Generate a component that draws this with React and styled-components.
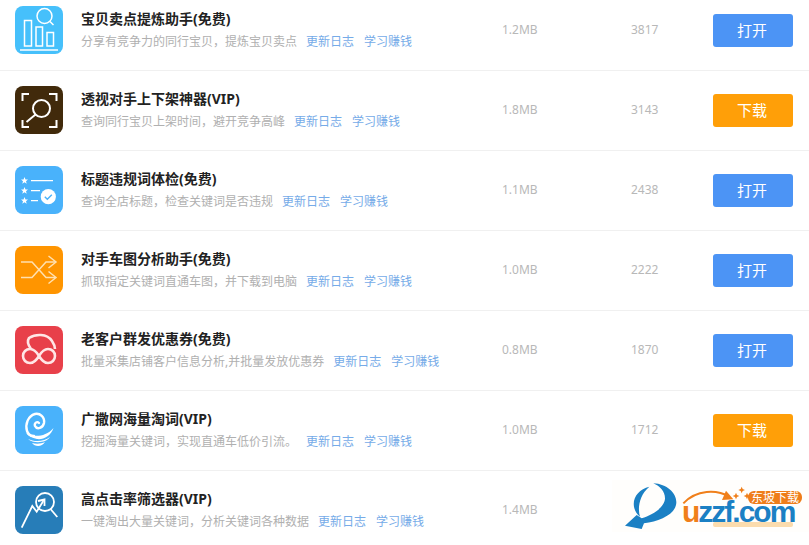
import React from 'react'
import styled, { createGlobalStyle } from 'styled-components'

const GlobalStyle = createGlobalStyle`
  html, body {
    margin: 0;
    padding: 0;
    background: #ffffff;
    overflow: hidden;
  }
  body {
    font-family: "Noto Sans", "Noto Sans CJK SC", sans-serif;
  }
`

const Page = styled.div`
  position: relative;
  width: 809px;
  height: 545px;
  overflow: hidden;
`

const List = styled.div`
  margin-top: -9px;
`

const Row = styled.div`
  display: flex;
  align-items: center;
  box-sizing: border-box;
  height: 80px;
  padding: 0 0 1px 15px;
  border-bottom: 1px solid #f0f0f0;
`

const IconBox = styled.div`
  width: 48px;
  height: 48px;
  flex: none;
  margin-right: 18px;
  border-radius: 8px;
  background: ${p => p.$bg};
  overflow: hidden;
  svg {
    display: block;
  }
`

const Info = styled.div`
  width: 421px;
  flex: none;
`

const Title = styled.div`
  font-size: 14px;
  font-weight: 700;
  line-height: 20px;
  color: #222222;
  white-space: nowrap;
`

const Desc = styled.div`
  display: flex;
  gap: 9px;
  margin-top: 4px;
  font-size: 12px;
  line-height: 18px;
  color: #b0b0b0;
  white-space: nowrap;
`

const DescLink = styled.span`
  color: #76abe8;
  & + & {
    margin-left: 1px;
  }
`

const Size = styled.div`
  width: 129px;
  flex: none;
  padding-bottom: 2px;
  font-size: 12px;
  color: #b8b8b8;
`

const Count = styled.div`
  width: 82px;
  flex: none;
  padding-bottom: 2px;
  font-size: 12px;
  color: #b8b8b8;
`

const ActionButton = styled.button`
  width: 80px;
  height: 33px;
  flex: none;
  margin-top: 1px;
  padding: 0 2px 2px 0;
  border: 0;
  border-radius: 3px;
  background: ${p => (p.$download ? '#ff9f08' : '#4c94f5')};
  color: #ffffff;
  font-family: inherit;
  font-size: 15px;
`

const Logo = styled.div`
  position: absolute;
  right: 0;
  top: 480px;
  width: 197px;
  height: 52px;
  background: #fffefc;
`

const LogoMark = styled.svg`
  position: absolute;
  left: 0;
  top: 0;
`

const LogoText = styled.div`
  position: absolute;
  left: 70px;
  top: 24px;
  font-family: "Liberation Sans", sans-serif;
  font-size: 30px;
  font-weight: 700;
  line-height: 16px;
  letter-spacing: -2px;
  color: #1b80c4;
`

const LogoU = styled.span`
  color: #f07f1a;
`

const LogoBar = styled.div`
  position: absolute;
  left: 101px;
  top: 42px;
  width: 80px;
  height: 5px;
  border-radius: 2px;
  background: #fbdcae;
`

const LogoBadge = styled.div`
  position: absolute;
  left: 136px;
  top: 11px;
  width: 54px;
  height: 13px;
  border-radius: 6px;
  background: #ef7d1a;
  color: #ffffff;
  font-size: 12px;
  line-height: 13px;
  text-align: center;
`

const line = { fill: 'none', stroke: '#fff', strokeWidth: 1.5 }

const ChartIcon = () => (
  <svg width="48" height="48" viewBox="0 0 48 48">
    <g {...line}>
      <rect x="9.5" y="14.5" width="7" height="25.5" />
      <rect x="21" y="21" width="6.5" height="19" />
      <rect x="32" y="26.5" width="6.5" height="13.5" />
      <circle cx="29.5" cy="10" r="7.5" />
      <path d="M35 15.5 L38.5 19" />
    </g>
    <path d="M5 44 H43" stroke="#fff" strokeWidth="1.6" />
  </svg>
)

const ScanIcon = () => (
  <svg width="48" height="48" viewBox="0 0 48 48">
    <g {...line} strokeWidth="2">
      <path d="M7.5 15 V8 H14 M34 8 H41.5 V15 M7.5 34 V41 H14 M34 41 H41.5 V34" />
      <circle cx="26.5" cy="22.5" r="8.5" />
      <path d="M20.5 28.5 L11.5 36" />
    </g>
  </svg>
)

const Star = ({ x, y }) => (
  <path
    transform={`translate(${x} ${y})`}
    d="M0 -3.6 L1 -1.1 L3.5 -1.1 L1.5 .5 L2.2 3 L0 1.6 L-2.2 3 L-1.5 .5 L-3.5 -1.1 L-1 -1.1 Z"
    fill="#fff"
  />
)

const CheckListIcon = () => (
  <svg width="48" height="48" viewBox="0 0 48 48">
    <Star x={9.5} y={14.7} />
    <Star x={9.5} y={24.7} />
    <Star x={9.5} y={34.7} />
    <path d="M16 14.7 H38 M16 24.7 H25 M16 34.7 H23" stroke="#fff" strokeWidth="1.3" />
    <circle cx="33.3" cy="30.7" r="7.6" fill="#fff" />
    <path d="M29.8 30.7 L32.3 33.2 L36.8 28.7" fill="none" stroke="#49b2fb" strokeWidth="1.4" />
  </svg>
)

const ShuffleIcon = () => (
  <svg width="48" height="48" viewBox="0 0 48 48">
    <g {...line} stroke="#ffe0b0">
      <path d="M6 16 H17 L31 31.5 H40" />
      <path d="M6 31.5 H17 L31 16 H40" />
      <path d="M33.5 10 L41 16 L33.5 22 M33.5 25.5 L41 31.5 L33.5 37.5" />
    </g>
  </svg>
)

const BearIcon = () => (
  <svg width="48" height="48" viewBox="0 0 48 48">
    <g fill="none" stroke="#ffe6e6" strokeWidth="2.6">
      <path d="M16 23 C13 19 12 15 14 12 C20 8 32 7 37 15 C39 18 40 20 40 23" />
      <path d="M24 30 C21 25 18 23 15 23 C11 23 8 26 8 30 C8 34 11 37 15 37 C18 37 21 35 24 30 C27 25 30 23 33 23 C37 23 40 26 40 30 C40 34 37 37 33 37 C30 37 27 35 24 30 Z" />
    </g>
  </svg>
)

const SwirlIcon = () => (
  <svg width="48" height="48" viewBox="0 0 48 48">
    <path
      d="M24 17 C22 15 19 17 20 20 C22 24 28 22 29 17 C30 11 25 7 20 8 C13 10 10 18 12 25 C13 28 16 30 19 30"
      fill="none"
      stroke="#fff"
      strokeWidth="2.4"
      strokeLinecap="round"
    />
    <path d="M38.5 22 C36 30 28 34 22 33 C17 32 13 30 11 27 C17 31 30 32 38.5 22 Z" fill="#fff" />
    <path d="M13 33 C19 36 29 36 35 31 C31 37 19 38 13 33 Z" fill="#fff" />
    <path d="M17 37 C21 38 26 38 30 36 C27 41 20 41 17 37 Z" fill="#fff" />
  </svg>
)

const TrendIcon = () => (
  <svg width="48" height="48" viewBox="0 0 48 48">
    <g {...line} strokeWidth="1.8">
      <path d="M6.7 41.7 L17.3 20 L21.7 25.7 L28.3 15" />
      <path d="M23 15 L29.5 13.5 L29.5 20" />
      <circle cx="30" cy="16" r="9" />
      <path d="M35.5 23 L42.3 31" />
    </g>
  </svg>
)

const rows = [
  { title: '宝贝卖点提炼助手(免费)', desc: '分享有竞争力的同行宝贝，提炼宝贝卖点', size: '1.2MB', count: 3817, bg: '#46c0fb', Icon: ChartIcon },
  { title: '透视对手上下架神器(VIP)', desc: '查询同行宝贝上架时间，避开竞争高峰', size: '1.8MB', count: 3143, bg: '#412a0b', Icon: ScanIcon, download: true },
  { title: '标题违规词体检(免费)', desc: '查询全店标题，检查关键词是否违规', size: '1.1MB', count: 2438, bg: '#49b2fb', Icon: CheckListIcon },
  { title: '对手车图分析助手(免费)', desc: '抓取指定关键词直通车图，并下载到电脑', size: '1.0MB', count: 2222, bg: '#ff9500', Icon: ShuffleIcon },
  { title: '老客户群发优惠券(免费)', desc: '批量采集店铺客户信息分析,并批量发放优惠券', size: '0.8MB', count: 1870, bg: '#e8404a', Icon: BearIcon },
  { title: '广撒网海量淘词(VIP)', desc: '挖掘海量关键词，实现直通车低价引流。', size: '1.0MB', count: 1712, bg: '#49b2fb', Icon: SwirlIcon, download: true },
  { title: '高点击率筛选器(VIP)', desc: '一键淘出大量关键词，分析关键词各种数据', size: '1.4MB', bg: '#277db8', Icon: TrendIcon },
]

const App = () => (
  <Page>
    <GlobalStyle />
    <List>
      {rows.map(({ title, desc, size, count, bg, Icon, download }) => (
        <Row key={title}>
          <IconBox $bg={bg}>
            <Icon />
          </IconBox>
          <Info>
            <Title>{title}</Title>
            <Desc>
              <span>{desc}</span>
              <DescLink>更新日志</DescLink>
              <DescLink>学习赚钱</DescLink>
            </Desc>
          </Info>
          <Size>{size}</Size>
          {count && <Count>{count}</Count>}
          {count && <ActionButton $download={download}>{download ? '下载' : '打开'}</ActionButton>}
        </Row>
      ))}
    </List>
    <Logo>
      <LogoMark width="197" height="52" viewBox="36 60 591 156">
        <path d="M160 70 C205 72 235 105 228 135 C222 165 175 185 132 190 L125 207 L75 197 L110 165 L125 175 C160 165 195 140 195 115 C195 95 180 78 160 70 Z" fill="#1b80c4" />
        <path d="M148 80 C115 88 95 115 103 145 C106 155 112 165 120 170 C112 145 118 105 148 80 Z" fill="#1b80c4" />
        <path d="M250 130 C290 88 350 88 388 110" fill="none" stroke="#f07f1a" strokeWidth="6" />
        <path d="M378 92 L400 118 L366 120 Z" fill="#f07f1a" />
        <path d="M408 98 L411 105 L418 108 L411 111 L408 118 L405 111 L398 108 L405 105 Z M425 80 L428 87 L435 90 L428 93 L425 100 L422 93 L415 90 L422 87 Z M441 98 L444 105 L451 108 L444 111 L441 118 L438 111 L431 108 L438 105 Z" fill="#f07f1a" />
      </LogoMark>
      <LogoBar />
      <LogoText>
        <LogoU>u</LogoU>zzf.com
      </LogoText>
      <LogoBadge>东坡下载</LogoBadge>
    </Logo>
  </Page>
)

export default App
